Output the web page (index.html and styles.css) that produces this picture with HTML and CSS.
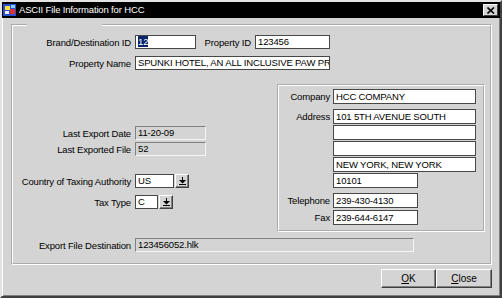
FILE: index.html
```html
<!DOCTYPE html>
<html lang="en">
<head>
  <meta charset="UTF-8" />
  <title>ASCII File Information for HCC</title>
  <link rel="stylesheet" href="styles.css">
</head>
<body>
  <div class="window">
    <div class="titlebar">
      <svg class="app-icon" width="14" height="14" viewBox="0 0 14 14">
        <rect x="0" y="1" width="13" height="12" fill="#2a4fd0"/>
        <rect x="2" y="3" width="5" height="4" fill="#f6e23a"/>
        <rect x="7" y="6" width="5" height="5" fill="#e03030"/>
        <rect x="2" y="8" width="4" height="3" fill="#f0f0f0"/>
        <path d="M8 2 L12 2 L12 5 L8 5 Z" fill="#8ad0ff"/>
      </svg>
      <span class="title">ASCII File Information for HCC</span>
      <div class="close-btn">
        <svg width="8" height="7" viewBox="0 0 8 7">
          <path d="M0.5 0.5 L7 6.5 M7 0.5 L0.5 6.5" stroke="#000" stroke-width="1.6"/>
        </svg>
      </div>
    </div>

    <div class="content">
      <fieldset class="group">
        <legend>&nbsp;</legend>

        <div class="row">
          <label class="lbl">Brand/Destination ID</label>
          <div class="field w-brand"><span class="selected">12</span></div>
          <label class="lbl-prop">Property ID</label>
          <div class="field w-prop">123456</div>
        </div>

        <div class="row gap-7">
          <label class="lbl">Property Name</label>
          <div class="field w-name">SPUNKI HOTEL, AN ALL INCLUSIVE PAW PRINT</div>
        </div>

        <div class="middle">
          <div class="left-col">
            <div class="row">
              <label class="lbl">Last Export Date</label>
              <div class="field readonly w-date">11-20-09</div>
            </div>
            <div class="row gap-2">
              <label class="lbl">Last Exported File</label>
              <div class="field readonly w-date">52</div>
            </div>
            <div class="row gap-18">
              <label class="lbl">Country of Taxing Authority</label>
              <div class="field w-country">US</div>
              <div class="drop-btn">
                <svg width="7" height="8" viewBox="0 0 7 8"><path d="M3 0h1v3h3l-3.5 3.5L0 3h3z M0 7h7v1H0z" fill="#000"/></svg>
              </div>
            </div>
            <div class="row gap-7">
              <label class="lbl">Tax Type</label>
              <div class="field w-tax">C</div>
              <div class="drop-btn">
                <svg width="7" height="8" viewBox="0 0 7 8"><path d="M3 0h1v3h3l-3.5 3.5L0 3h3z M0 7h7v1H0z" fill="#000"/></svg>
              </div>
            </div>
          </div>

          <fieldset class="address">
            <div class="arow">
              <label class="albl">Company</label>
              <div class="field afield">HCC COMPANY</div>
            </div>
            <div class="arow gap-5">
              <label class="albl">Address</label>
              <div class="field afield">101 5TH AVENUE SOUTH</div>
            </div>
            <div class="arow gap-1">
              <span class="albl"></span>
              <div class="field afield"></div>
            </div>
            <div class="arow gap-1">
              <span class="albl"></span>
              <div class="field afield"></div>
            </div>
            <div class="arow gap-1">
              <span class="albl"></span>
              <div class="field afield">NEW YORK, NEW YORK</div>
            </div>
            <div class="arow gap-1">
              <span class="albl"></span>
              <div class="field azip">10101</div>
            </div>
            <div class="arow gap-5">
              <label class="albl">Telephone</label>
              <div class="field azip">239-430-4130</div>
            </div>
            <div class="arow gap-2">
              <label class="albl">Fax</label>
              <div class="field azip">239-644-6147</div>
            </div>
          </fieldset>
        </div>

        <div class="row export">
          <label class="lbl">Export File Destination</label>
          <div class="field readonly w-export">123456052.hlk</div>
        </div>
      </fieldset>

      <div class="buttons">
        <button class="btn"><u>O</u>K</button>
        <button class="btn btn-close"><u>C</u>lose</button>
      </div>
    </div>
  </div>
</body>
</html>
```

FILE: styles.css
```css
* {
  box-sizing: border-box;
}

body {
  margin: 0;
  background-color: #d4d4d4;
  font-family: "Liberation Sans", Arial, sans-serif;
  font-size: 9.5px;
  letter-spacing: -0.15px;
  color: #000;
}

.window {
  width: 502px;
  height: 298px;
  border: 2px solid;
  border-color: #e4e4e4 #404040 #404040 #e4e4e4;
  box-shadow: inset 1px 1px #fff, inset -1px -1px #808080;
  background-color: #d4d4d4;
}

.titlebar {
  height: 16px;
  background-color: #000;
  color: #fff;
  display: flex;
  align-items: center;
  padding: 0 2px 0 1px;
  gap: 2px;
}

.titlebar .title {
  flex: 1;
  font-size: 9.5px;
  line-height: 14px;
}

.close-btn {
  width: 15px;
  height: 12px;
  background-color: #d4d4d4;
  border: 1px solid;
  border-color: #fff #404040 #404040 #fff;
  display: flex;
  align-items: center;
  justify-content: center;
}

.content {
  padding: 6px 8px 0 9px;
}

/* outer etched group */
.group {
  margin: 0;
  height: 241px;
  padding: 9px 5px 0 0;
  border: 2px groove #fff;
}

.group legend {
  width: 75px;
  margin-left: 14px;
  padding: 0;
  font-size: 1px;
  line-height: 2px;
  height: 2px;
}

.row {
  display: flex;
  align-items: center;
  height: 14px;
}

.gap-1 { margin-top: 1px; }
.gap-2 { margin-top: 2px; }
.gap-5 { margin-top: 5px; }
.gap-7 { margin-top: 7px; }
.gap-18 { margin-top: 18px; }

.lbl {
  width: 118px;
  margin-right: 4px;
  text-align: right;
  white-space: nowrap;
}

.lbl-prop {
  width: 55px;
  margin-right: 4px;
  text-align: right;
  white-space: nowrap;
}

.field {
  height: 14px;
  line-height: 12px;
  padding-left: 2px;
  background-color: #fff;
  border: 1px solid #474747;
  white-space: nowrap;
  overflow: hidden;
}

.field.readonly {
  background-color: #d4d4d4;
  border-color: #808080 #f4f4f4 #f4f4f4 #808080;
}

.selected {
  background-color: #0a246a;
  color: #fff;
}

.w-brand { width: 61px; }
.w-prop { width: 75px; }
.w-name { width: 195px; }
.w-date { width: 71px; }
.w-country { width: 39px; margin-right: 1px; }
.w-tax { width: 23px; margin-right: 1px; }
.w-export { width: 279px; }

.drop-btn {
  width: 14px;
  height: 14px;
  border: 1px solid;
  border-color: #fff #404040 #404040 #fff;
  box-shadow: inset -1px -1px #808080;
  display: flex;
  align-items: center;
  justify-content: center;
}

.middle {
  display: grid;
  grid-template-columns: 264px 207px;
  margin-top: 14px;
}

.left-col {
  padding-top: 42px;
}

/* right address box */
.address {
  margin: 0;
  padding: 3px 7px 3px 0;
  border: 2px groove #fff;
  height: 148px;
}

.arow {
  display: flex;
  align-items: flex-start;
}

.albl {
  width: 51px;
  margin-right: 3px;
  text-align: right;
  line-height: 15px;
  white-space: nowrap;
}

.afield {
  width: 143px;
  height: 15px;
  line-height: 13px;
}

.azip {
  width: 85px;
  height: 15px;
  line-height: 13px;
}

.export {
  margin-top: 6px;
}

.buttons {
  display: flex;
  justify-content: flex-end;
  margin-top: 4px;
}

.btn {
  height: 19px;
  width: 55px;
  margin: 0;
  padding: 0;
  font-family: inherit;
  font-size: 10px;
  letter-spacing: 0;
  background-color: #d4d4d4;
  border: 1px solid;
  border-color: #fff #404040 #404040 #fff;
  box-shadow: inset -1px -1px #808080;
  color: #000;
}

.btn-close {
  width: 56px;
}
```
